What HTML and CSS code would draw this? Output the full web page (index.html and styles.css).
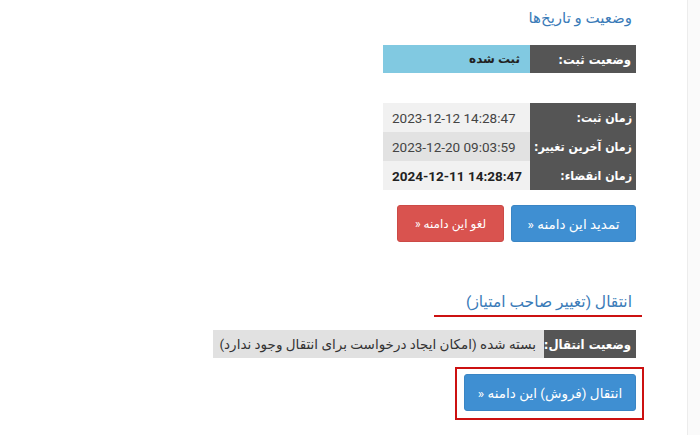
FILE: index.html
```html
<!DOCTYPE html>
<html lang="fa">
<head>
<meta charset="utf-8">
<link rel="stylesheet" href="styles.css">
</head>
<body>
<div class="page">
  <main class="main">
    <h3 class="title">وضعیت و تاریخ‌ها</h3>
    <div class="kv status-row">
      <div class="label">وضعیت ثبت:</div>
      <div class="value value-info">ثبت شده</div>
    </div>
    <div class="dates">
      <div class="dates-labels">
        <div class="dl">زمان ثبت:</div>
        <div class="dl">زمان آخرین تغییر:</div>
        <div class="dl">زمان انقضاء:</div>
      </div>
      <div class="dates-values">
        <div class="dv light">2023-12-12 14:28:47</div>
        <div class="dv dark">2023-12-20 09:03:59</div>
        <div class="dv light strong">2024-12-11 14:28:47</div>
      </div>
    </div>
    <div class="actions">
      <a class="btn btn-blue">تمدید این دامنه «</a>
      <a class="btn btn-red">لغو این دامنه «</a>
    </div>

    <h3 class="title title-marked">انتقال (تغییر صاحب امتیاز)</h3>
    <div class="kv transfer-row">
      <div class="label">وضعیت انتقال:</div>
      <div class="value value-gray">بسته شده (امکان ایجاد درخواست برای انتقال وجود ندارد)</div>
    </div>
    <div class="marked-box">
      <a class="btn btn-blue btn-wide">انتقال (فروش) این دامنه «</a>
    </div>
  </main>
  <aside class="side"></aside>
</div>
</body>
</html>
```

FILE: styles.css
```css
html, body {
  margin: 0;
  padding: 0;
  background: #ffffff;
}
body {
  font-family: "Roboto", "DejaVu Sans", sans-serif;
  color: #333;
}
.page {
  display: flex;
  width: 700px;
  height: 435px;
  overflow: hidden;
}
.main {
  width: 636px;
  padding: 8px 51px 0 0;
  border-right: 1px solid #ececec;
  direction: rtl;
  display: flex;
  flex-direction: column;
  align-items: flex-start;
}
.side {
  flex: 1;
  background: #fafafa;
}
.title {
  margin: 0 4px 0 0;
  font-size: 15px;
  line-height: 20px;
  font-weight: normal;
  color: #3a7bb8;
  white-space: nowrap;
}
.kv {
  display: flex;
  height: 28px;
  font-size: 12px;
  white-space: nowrap;
}
.label {
  background: #555555;
  color: #fff;
  font-family: "DejaVu Sans Condensed", "DejaVu Sans", sans-serif;
  font-stretch: condensed;
  font-weight: bold;
  font-size: 13px;
  padding: 0 5px;
  display: flex;
  align-items: center;
  box-sizing: border-box;
}
.value {
  display: flex;
  align-items: center;
  padding: 0 10px;
  box-sizing: border-box;
}
.status-row {
  margin-top: 17px;
}
.status-row .label {
  width: 106px;
}
.value-info {
  width: 147px;
  background: #81c9e1;
  font-weight: bold;
  color: #222;
}
.dates {
  margin-top: 30px;
  display: flex;
  font-size: 12px;
  white-space: nowrap;
}
.dates-labels {
  width: 106px;
  background: #555555;
  color: #fff;
  overflow: hidden;
}
.dl {
  height: 29px;
  display: flex;
  align-items: center;
  padding: 0 4px;
  font-family: "DejaVu Sans Condensed", "DejaVu Sans", sans-serif;
  font-stretch: condensed;
  font-weight: bold;
  font-size: 12.3px;
}
.dates-values {
  width: 147px;
  direction: ltr;
}
.dv {
  height: 29px;
  display: flex;
  align-items: center;
  padding: 0 9px;
  font-size: 13.5px;
  color: #444;
}
.dv.light { background: #f1f1f1; }
.dv.dark { background: #e2e2e2; }
.dv.strong { font-weight: bold; color: #222; }
.actions {
  margin-top: 15px;
  display: flex;
  gap: 7px;
}
.btn {
  display: flex;
  align-items: center;
  justify-content: center;
  height: 37px;
  border-radius: 3px;
  color: #fff;
  font-size: 13.5px;
  text-decoration: none;
  white-space: nowrap;
  box-sizing: border-box;
}
.btn-blue {
  width: 125px;
  background: #3f8fd2;
  border: 1px solid #3a85c4;
}
.btn-red {
  width: 107px;
  background: #d9534f;
  border: 1px solid #cc4a46;
  font-size: 12px;
}
.title-marked {
  margin-top: 50px;
  margin-right: -6px;
  padding: 0 10px 3px 32px;
  border-bottom: 2px solid #cc1111;
  font-size: 15.5px;
}
.transfer-row {
  margin-top: 13px;
}
.transfer-row .label {
  width: 92px;
}
.value-gray {
  width: 331px;
  background: #e1e1e1;
  color: #333;
  font-size: 13.5px;
  padding: 0 8px;
}
.marked-box {
  margin-top: 9px;
  margin-right: -8px;
  border: 2px solid #cc1111;
  padding: 5px 6px 7px 7px;
}
.btn-wide {
  width: 172px;
  font-size: 13.5px;
}
```
